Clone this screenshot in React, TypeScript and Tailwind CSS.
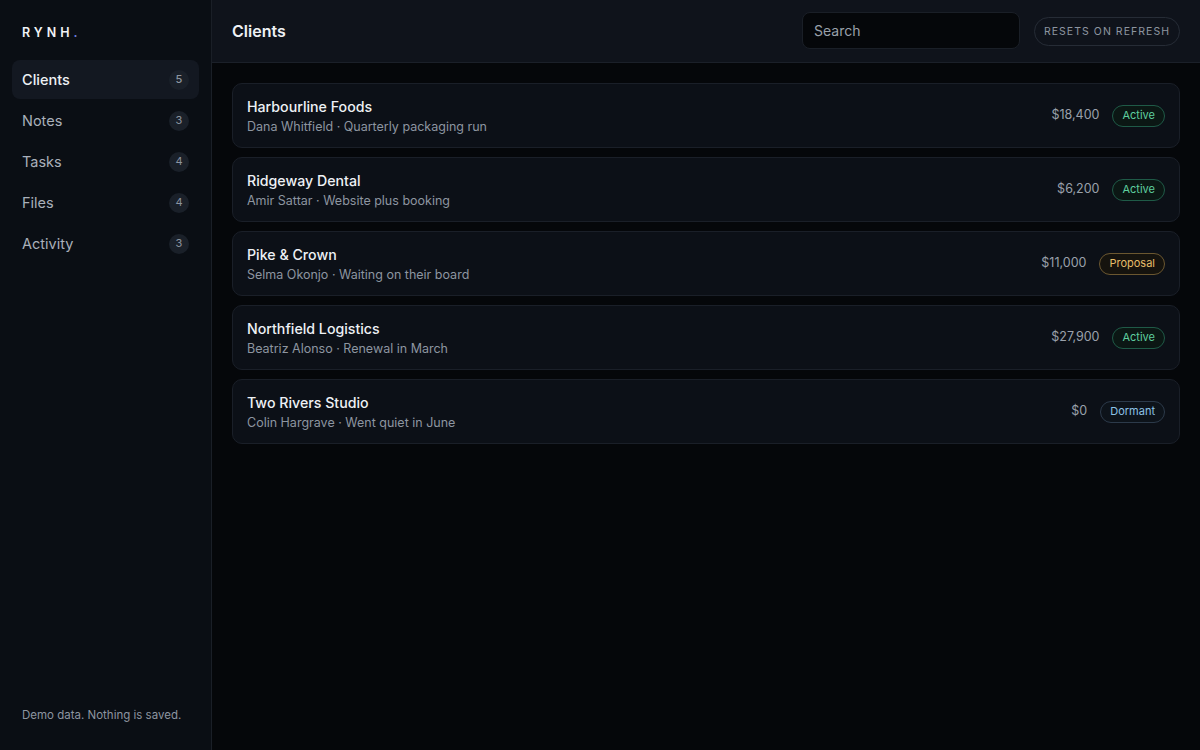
import React from "react";

type Client = {
  name: string;
  contact: string;
  note: string;
  amount: string;
  status: "Active" | "Proposal" | "Dormant";
};

const clients: Client[] = [
  { name: "Harbourline Foods", contact: "Dana Whitfield", note: "Quarterly packaging run", amount: "$18,400", status: "Active" },
  { name: "Ridgeway Dental", contact: "Amir Sattar", note: "Website plus booking", amount: "$6,200", status: "Active" },
  { name: "Pike & Crown", contact: "Selma Okonjo", note: "Waiting on their board", amount: "$11,000", status: "Proposal" },
  { name: "Northfield Logistics", contact: "Beatriz Alonso", note: "Renewal in March", amount: "$27,900", status: "Active" },
  { name: "Two Rivers Studio", contact: "Colin Hargrave", note: "Went quiet in June", amount: "$0", status: "Dormant" },
];

const nav = [
  { label: "Clients", count: 5, active: true },
  { label: "Notes", count: 3 },
  { label: "Tasks", count: 4 },
  { label: "Files", count: 4 },
  { label: "Activity", count: 3 },
];

function StatusPill({ status }: { status: Client["status"] }) {
  if (status === "Active")
    return (
      <span className="inline-flex h-[22px] items-center rounded-full border border-[#1f5a47] bg-[#0b1714] px-[9px] text-[11px] text-[#5fcf9f]">
        Active
      </span>
    );
  if (status === "Proposal")
    return (
      <span className="inline-flex h-[22px] items-center rounded-full border border-[#6b5730] bg-[#15130e] px-[9px] text-[11px] text-[#e6bd6a]">
        Proposal
      </span>
    );
  return (
    <span className="inline-flex h-[22px] items-center rounded-full border border-[#2c3a4a] bg-[#0d131a] px-[9px] text-[11px] text-[#8cc2e6]">
      Dormant
    </span>
  );
}

export default function App() {
  return (
    <div
      className="flex h-[750px] w-[1200px] bg-[#05070a] text-[#e8ebf0]"
      style={{ fontFamily: "Inter, 'Noto Sans', sans-serif" }}
    >
      <aside className="flex w-[212px] shrink-0 flex-col border-r border-[#1a1f27] bg-[#0a0e14] px-3">
        <div className="flex h-[60px] items-center px-[10px] pt-[6px] text-[12.5px] font-semibold tracking-[0.32em] text-[#f1f3f6]">
          RYNH<span className="text-[#6e7fe0]">.</span>
        </div>
        <nav className="flex flex-col gap-[2px]">
          {nav.map((n) => (
            <div
              key={n.label}
              className={`flex h-[39px] items-center justify-between rounded-lg px-[10px] text-[14.5px] ${
                n.active ? "bg-[#131821] font-medium text-[#eef1f5]" : "text-[#a9b0ba]"
              }`}
            >
              <span>{n.label}</span>
              <span className="flex h-5 w-5 items-center justify-center rounded-full bg-[#1a2029] text-[11px] text-[#8d95a0]">
                {n.count}
              </span>
            </div>
          ))}
        </nav>
        <div className="mt-auto px-[10px] pb-[26px] text-[11.5px] text-[#8d95a0]">
          Demo data. Nothing is saved.
        </div>
      </aside>

      <main className="flex flex-1 flex-col">
        <header className="flex h-[63px] shrink-0 items-center border-b border-[#1b2029] bg-[#0f131b] pl-5 pr-5">
          <h1 className="text-[16px] font-semibold text-[#eef1f5]">Clients</h1>
          <div className="ml-auto flex items-center gap-[14px]">
            <div className="mb-[2px] flex h-[37px] w-[218px] items-center rounded-lg border border-[#1a1f27] bg-[#05070a] px-[11px] text-[14px] text-[#9aa1ab]">
              Search
            </div>
            <div className="flex h-[29px] w-[146px] items-center justify-center rounded-full border border-[#262c36] pt-[1px] text-[10.5px] tracking-[0.1em] text-[#8d95a0]">
              RESETS ON REFRESH
            </div>
          </div>
        </header>

        <section className="flex flex-col gap-[9px] px-5 pt-5">
          {clients.map((c) => (
            <div
              key={c.name}
              className="flex h-[65px] items-center justify-between rounded-[10px] border border-[#1a1f28] bg-[#0c1017] pl-[14px] pr-[14px]"
            >
              <div className="flex flex-col gap-[1px] pt-[2px]">
                <div className="text-[14.2px] font-medium leading-[20px] text-[#eef1f5]">{c.name}</div>
                <div className="text-[12.5px] leading-[18px] text-[#8d95a0]">
                  {c.contact} · {c.note}
                </div>
              </div>
              <div className="flex items-center gap-[13px]">
                <span className="text-[12.5px] text-[#9aa1ab]">{c.amount}</span>
                <StatusPill status={c.status} />
              </div>
            </div>
          ))}
        </section>
      </main>
    </div>
  );
}
